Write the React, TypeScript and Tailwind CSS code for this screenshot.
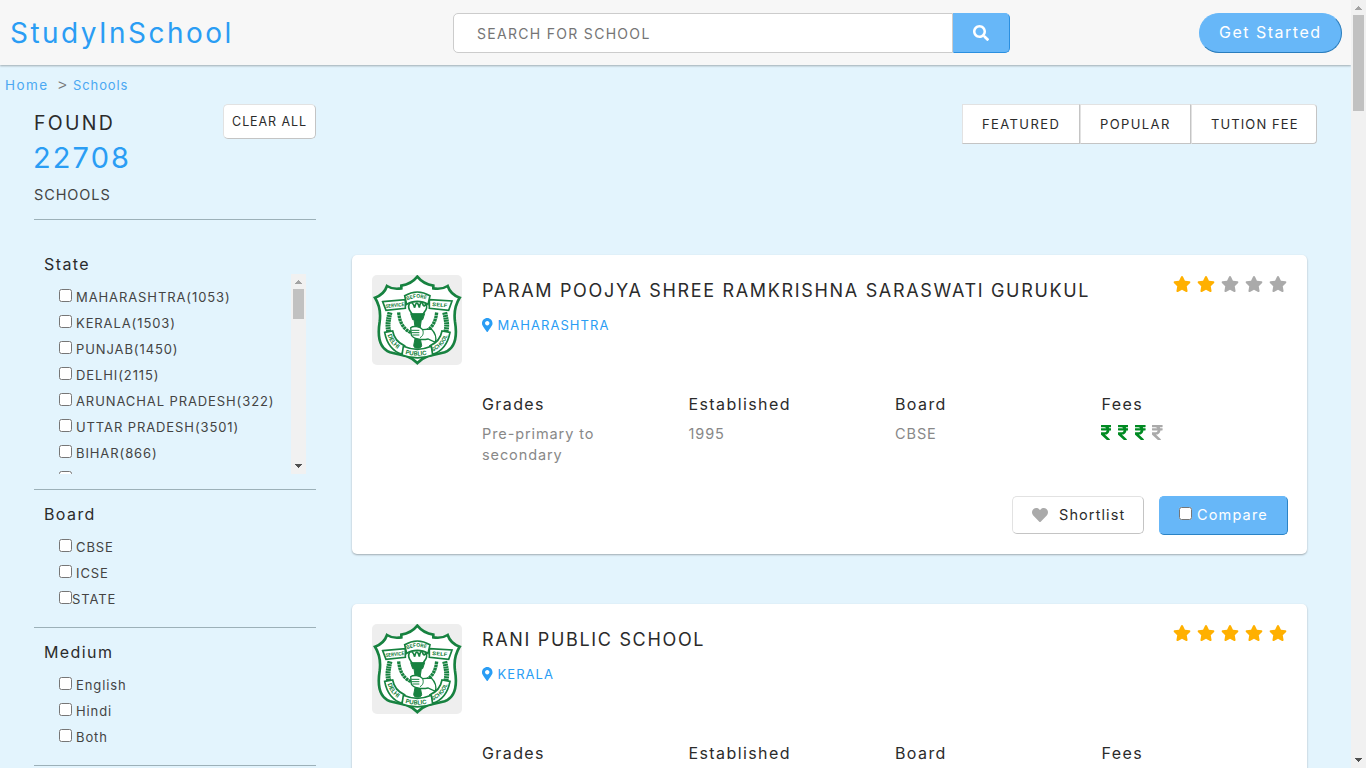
import type { ReactNode } from "react";
import { FaHeart, FaMapMarkerAlt, FaRupeeSign, FaSearch, FaStar } from "react-icons/fa";

const states = [
  "MAHARASHTRA(1053)",
  "KERALA(1503)",
  "PUNJAB(1450)",
  "DELHI(2115)",
  "ARUNACHAL PRADESH(322)",
  "UTTAR PRADESH(3501)",
  "BIHAR(866)",
];

function Arrow({ up = false }: { up?: boolean }) {
  return (
    <svg viewBox="0 0 15 15" className="block h-[15px] w-[15px] shrink-0" shapeRendering="crispEdges">
      <path d={up ? "M4 10 L7.5 6 L11 10 Z" : "M4 5 L7.5 9 L11 5 Z"} fill={up ? "#a3a3a3" : "#505050"} />
    </svg>
  );
}

function Scrollbar({ thumb }: { thumb: string }) {
  return (
    <div className="flex h-full w-[15px] shrink-0 flex-col items-center bg-[#f1f1f1]">
      <Arrow up />
      <div className={`w-[11px] bg-[#c1c1c1] ${thumb}`} />
      <div className="flex-1" />
      <Arrow />
    </div>
  );
}

function Emblem() {
  return (
    <svg viewBox="0 0 270 270" className="h-[90px] w-[90px] shrink-0 rounded-[5px] bg-[#eeeeee]" fill="none" stroke="#178240">
      <path
        d="M136 5 C148 20 164 29 184 32 L184 40 C200 43 216 40 227 33 C232 48 246 62 263 68 C246 95 246 118 249 140 C257 190 245 222 218 232 C190 240 158 240 136 264 C114 240 82 240 54 232 C27 222 15 190 23 140 C26 118 26 95 9 68 C26 62 40 48 45 33 C56 40 72 43 88 40 L88 32 C108 29 124 20 136 5Z"
        fill="#fff"
        strokeWidth="8"
      />
      <path d="M80 112 C84 160 112 176 136 176 C160 176 190 158 194 112" strokeWidth="10" strokeDasharray="8 1.5" />
      <path d="M54 112 C46 146 46 160 54 180 M218 112 C226 146 226 160 218 180" strokeWidth="15" strokeDasharray="6 1.5" />
      <path d="M112 86 C104 104 118 110 122 120 L152 120 C156 108 170 104 162 84 C160 94 154 96 152 86 C148 78 144 84 142 98 C138 82 132 78 128 98 C124 84 116 78 112 86Z" fill="#fff" strokeWidth="5" />
      <path d="M116 116 H158 L152 134 H122Z M126 134 H148 L144 162 H130Z M130 186 H144 L149 212 C149 222 125 222 125 212Z" fill="#178240" strokeWidth="3" />
      <path d="M116 158 C124 152 144 154 152 164 L178 162 C190 174 194 188 190 202 L168 192 C148 196 124 192 118 180Z" fill="#fff" strokeWidth="4" />
      <path d="M118 166 H142 M118 173 H142 M121 180 H142 M152 164 C156 176 152 184 144 188" strokeWidth="3" />
      <path d="M32 80 L100 74 L100 100 L42 106Z M172 74 L240 78 L230 106 L172 100Z" fill="#fff" strokeWidth="5" />
      <path d="M98 62 C122 48 150 48 174 62 L168 88 C150 76 122 76 104 88Z" fill="#fff" strokeWidth="5" />
      <path d="M38 172 L62 168 C66 190 78 204 98 212 L90 238 C60 228 44 204 38 172Z M234 172 L210 168 C206 190 194 204 174 212 L182 238 C212 228 228 204 234 172Z" fill="#fff" strokeWidth="5" />
      <path d="M94 214 C122 226 150 226 178 214 L182 240 C150 252 122 252 90 240Z" fill="#fff" strokeWidth="5" />
      <defs>
        <path id="before" d="M106 77 C124 66 148 66 170 77" />
        <path id="delhi" d="M47 180 C54 204 68 220 92 230" />
        <path id="school" d="M182 230 C206 218 222 202 229 174" />
        <path id="public" d="M100 237 C124 244 150 244 176 236" />
      </defs>
      <g fill="#178240" stroke="none" fontFamily="Inter, sans-serif" fontWeight="700" fontSize="18">
        <text fontSize="15" transform="translate(41 99) rotate(-6)" textLength="57" lengthAdjust="spacingAndGlyphs">SERVICE</text>
        <text fontSize="15" transform="translate(180 93) rotate(5)" textLength="46" lengthAdjust="spacingAndGlyphs">SELF</text>
        <text fontSize="15"><textPath href="#before">BEFORE</textPath></text>
        <text><textPath href="#delhi">DELHI</textPath></text>
        <text fontSize="16"><textPath href="#school">SCHOOL</textPath></text>
        <text><textPath href="#public">PUBLIC</textPath></text>
      </g>
    </svg>
  );
}

function Option({ label, tight = false }: { label?: string; tight?: boolean }) {
  return (
    <label className="flex h-[26px] shrink-0 items-start pl-[15px]">
      <input type="checkbox" className="h-[13px] w-[13px] shrink-0" />
      {label && (
        <span className={`${tight ? "" : "ml-1"} whitespace-nowrap text-[13px] leading-[16px] tracking-[0.9px] text-[#444]`}>{label}</span>
      )}
    </label>
  );
}

function Filter({ title, children }: { title: string; children: ReactNode }) {
  return (
    <section className="h-[138px] border-b border-[#9cb0b8] px-[10px] pt-[12px]">
      <h3 className="text-base leading-6 tracking-[1.4px] text-[#2b2b2b]">{title}</h3>
      <div className="mt-[13px]">{children}</div>
    </section>
  );
}

function Field({ title, children }: { title: string; children: ReactNode }) {
  return (
    <div>
      <h4 className="text-base leading-6 tracking-[1.4px] text-[#2b2b2b]">{title}</h4>
      <div className="mt-[7px] text-[14.5px] leading-[21px] tracking-[0.9px] text-[#888]">{children}</div>
    </div>
  );
}

function SchoolCard({ name, place, rating }: { name: string; place: string; rating: number }) {
  return (
    <article className="flex h-[299px] shrink-0 rounded-[5px] bg-white px-5 pt-5 shadow-[0_1px_2px_rgba(0,0,0,0.3)]">
      <Emblem />
      <div className="ml-5 flex min-w-0 flex-1 flex-col">
        <div className="flex justify-between">
          <h2 className="mt-[3px] text-[18px] leading-[26px] tracking-[1.67px] text-[#2b2b2b]">{name}</h2>
          <div className="mt-px flex h-4 gap-[6px]">
            {[1, 2, 3, 4, 5].map((n) => (
              <FaStar key={n} className={`h-4 w-[18px] ${n <= rating ? "text-[#ffb000]" : "text-[#aaaaaa]"}`} />
            ))}
          </div>
        </div>
        <div className="mt-[11px] flex h-5 items-center text-[#2a9df4]">
          <FaMapMarkerAlt className="h-[14px] w-[10.5px]" />
          <span className="ml-[5px] text-[13px] leading-5 tracking-[1.05px]">{place}</span>
        </div>
        <div className="-mr-[21px] mt-[57px] grid grid-cols-4">
          <Field title="Grades">
            <span className="block w-[140px]">Pre-primary to secondary</span>
          </Field>
          <Field title="Established">1995</Field>
          <Field title="Board">CBSE</Field>
          <Field title="Fees">
            <div className="flex gap-[6.7px] pt-px">
              {[1, 2, 3, 4].map((n) => (
                <FaRupeeSign key={n} className={`-ml-px mr-px h-[17px] w-[10.6px] ${n < 4 ? "text-[#008a22]" : "text-[#aaaaaa]"}`} />
              ))}
            </div>
          </Field>
        </div>
        <div className="mb-[19px] mr-[-1px] mt-auto flex justify-end gap-[15px]">
          <button className="flex h-[38px] w-[132px] items-center rounded-[5px] border border-[#e2e2e2] border-b-[#c4c4c4] border-r-[#c4c4c4] pl-[19px] text-[14.5px] tracking-[1.1px] text-[#2b2b2b]">
            <FaHeart className="h-4 w-4 text-[#aaaaaa]" />
            <span className="ml-[11px]">Shortlist</span>
          </button>
          <label className="flex h-[39px] w-[129px] items-start rounded-[5px] border border-[#67b7f8] border-b-[#2a83c6] border-r-[#2a83c6] bg-[#67b7f8] pl-[19px] text-[14.5px] tracking-[1.15px] text-white">
            <input type="checkbox" className="mt-[10px] h-[13px] w-[13px]" />
            <span className="ml-[5px] mt-[8px] leading-5">Compare</span>
          </label>
        </div>
      </div>
    </article>
  );
}

export default function App() {
  return (
    <div className="flex h-[768px] w-[1366px] overflow-hidden bg-[#e3f4fd] font-['Inter',sans-serif]">
      <div className="flex min-w-0 flex-1 flex-col overflow-hidden">
        <header className="flex h-[65px] shrink-0 items-center justify-between bg-[#f7f7f7] pl-[10px] pr-[9px] shadow-[0_1px_2px_rgba(0,0,0,0.3)]">
          <div className="w-[443px] text-[28px] leading-10 tracking-[2.45px] text-[#2a9df4]">StudyInSchool</div>
          <div className="flex h-10 w-[557px]">
            <input
              placeholder="SEARCH FOR SCHOOL"
              className="w-[500px] rounded-l-[5px] border border-[#cccccc] bg-white pl-[23px] pt-px text-[14px] tracking-[1.3px] placeholder:text-[#757575]"
            />
            <button className="flex flex-1 items-center justify-center rounded-r-[5px] border border-[#67b7f8] border-b-[#2a8fe0] border-r-[#2a8fe0] bg-[#67b7f8] pr-[2px] text-white">
              <FaSearch className="h-4 w-4" />
            </button>
          </div>
          <div className="flex-1" />
          <button className="h-10 w-[143px] rounded-full border border-[#67b7f8] border-b-[#2a7dbd] border-r-[#2a7dbd] bg-[#67b7f8] pb-[2px] pl-[19px] text-left text-base tracking-[1.5px] text-white">
            Get Started
          </button>
        </header>

        <nav className="flex h-[39px] shrink-0 items-center text-[13px] leading-5 text-[#4ba8f2] pl-[5px]">
          <span className="w-[53px] text-[13.5px] tracking-[1.4px]">Home</span>
          <span className="w-[15px] font-['Liberation_Sans',sans-serif] text-[15px] text-[#777]">&gt;</span>
          <span className="tracking-[0.9px]">Schools</span>
        </nav>

        <main className="flex flex-1 pl-[34px]">
          <aside className="w-[282px] shrink-0">
            <div className="flex h-[116px] justify-between border-b border-[#9cb0b8]">
              <div>
                <div className="mt-[7px] text-[19.5px] leading-6 tracking-[2.3px] text-[#2b2b2b]">FOUND</div>
                <div className="-ml-px mt-[5px] text-[29px] leading-9 tracking-[2.1px] text-[#2a9df4]">22708</div>
                <div className="mt-[9px] text-[14.5px] leading-5 tracking-[0.9px] text-[#444]">SCHOOLS</div>
              </div>
              <button className="h-[35px] w-[93px] rounded-[5px] border border-[#e2e2e2] border-b-[#c4c4c4] border-r-[#c4c4c4] bg-white pt-px text-[12.5px] tracking-[0.9px] text-[#2b2b2b]">
                CLEAR ALL
              </button>
            </div>
            <section className="h-[270px] border-b border-[#9cb0b8] px-[10px] pt-[32px]">
              <h3 className="h-[22px] text-base leading-6 tracking-[1.4px] text-[#2b2b2b]">State</h3>
              <div className="flex h-[200px] overflow-hidden">
                <div className="flex flex-1 flex-col pt-[15px]">
                  {states.map((s) => (
                    <Option key={s} label={s} />
                  ))}
                  <Option />
                </div>
                <Scrollbar thumb="h-[30px]" />
              </div>
            </section>
            <Filter title="Board">
              <Option label="CBSE" />
              <Option label="ICSE" />
              <Option label="STATE" tight />
            </Filter>
            <Filter title="Medium">
              <Option label="English" />
              <Option label="Hindi" />
              <Option label="Both" />
            </Filter>
          </aside>

          <div className="ml-9 flex w-[965px] flex-col">
            <div className="flex h-10 shrink-0 justify-end text-[13px] tracking-[1.4px] text-[#2b2b2b]">
              <button className="w-[118px] border border-[#e2e2e2] border-b-[#c4c4c4] border-r-[#c4c4c4] bg-white pl-[19px] pt-[2px] text-left">FEATURED</button>
              <button className="w-[111px] border border-[#e2e2e2] border-b-[#c4c4c4] border-r-[#c4c4c4] bg-white pl-[19px] pt-[2px] text-left">POPULAR</button>
              <button className="w-[126px] rounded-r-[4px] border border-[#e2e2e2] border-b-[#c4c4c4] border-r-[#c4c4c4] bg-white pl-[19px] pt-[2px] text-left tracking-[1.1px]">TUTION FEE</button>
            </div>
            <div className="mt-[111px] flex w-[955px] flex-col gap-[50px]">
              <SchoolCard name="PARAM POOJYA SHREE RAMKRISHNA SARASWATI GURUKUL" place="MAHARASHTRA" rating={2} />
              <SchoolCard name="RANI PUBLIC SCHOOL" place="KERALA" rating={5} />
            </div>
          </div>
        </main>
      </div>
      <Scrollbar thumb="h-24" />
    </div>
  );
}
